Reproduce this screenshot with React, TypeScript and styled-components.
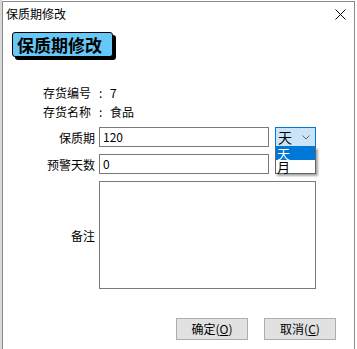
import React from "react";
import styled, { createGlobalStyle } from "styled-components";

const GlobalStyle = createGlobalStyle`
  html, body { margin: 0; padding: 0; background: #ffffff; }
  body { font-family: "Noto Sans CJK SC", "Liberation Sans", sans-serif; font-size: 12px; color: #000; }
  * { box-sizing: border-box; }
`;

const Page = styled.div`
  width: 357px;
  height: 349px;
  padding: 1px 2px 0 2px;
  background: linear-gradient(to right, #d8d8d8 0, #d8d8d8 2px, #ffffff 2px);
  overflow: hidden;
`;

const Window = styled.div`
  width: 353px;
  height: 348px;
  border: 1px solid #8a8a8a;
  border-bottom: none;
  background: #fff;
  display: flex;
  flex-direction: column;
`;

const TitleBar = styled.div`
  height: 28px;
  display: flex;
  align-items: flex-start;
  justify-content: space-between;
  padding: 5px 8px 0 3px;
`;

const TitleText = styled.span`
  font-size: 12px;
  line-height: 14px;
`;

const CloseIcon = styled.svg`
  width: 11px;
  height: 11px;
  margin-top: 2px;
`;

const Content = styled.div`
  display: flex;
  flex-direction: column;
  padding: 2px 0 0 9px;
`;

const Badge = styled.div`
  width: 101px;
  height: 25px;
  background: #66c8f6;
  border: 1px solid #000;
  border-radius: 3px;
  box-shadow: 3px 3px 0 #000;
  font-size: 17px;
  font-weight: bold;
  line-height: 23px;
  padding-left: 4px;
`;

const InfoBlock = styled.div`
  margin-top: 26px;
  padding-left: 31px;
  display: flex;
  flex-direction: column;
`;

const InfoRow = styled.div`
  display: flex;
  height: 19px;
  line-height: 19px;
`;

const InfoLabel = styled.span`
  width: 56px;
`;

const InfoColon = styled.span`
  width: 11px;
`;

const FormGrid = styled.div`
  margin-top: 6px;
  margin-left: -9px;
  display: grid;
  grid-template-columns: 96px 176px 41px;
  grid-template-rows: 20px 20px 108px;
  row-gap: 7px;
  position: relative;
`;

const FieldLabel = styled.label`
  padding-right: 4px;
  display: flex;
  align-items: center;
  justify-content: flex-end;
`;

const TextBox = styled.div`
  width: 170px;
  height: 20px;
  border: 1px solid #7a7a7a;
  padding-left: 3px;
  line-height: 18px;
  font-size: 12px;
`;

const Select = styled.div`
  width: 41px;
  height: 20px;
  border: 1px solid #0078d7;
  background: #cce4f7;
  display: flex;
  align-items: center;
  justify-content: space-between;
  padding: 0 5px 0 2px;
  font-size: 14px;
  line-height: 16px;
`;

const Chevron = styled.svg`
  width: 8px;
  height: 5px;
`;

const DropList = styled.div`
  position: absolute;
  left: 272px;
  top: 20px;
  width: 41px;
  border: 1px solid #646464;
  border-top: none;
  background: #fff;
  box-shadow: 2px 2px 2px rgba(0, 0, 0, 0.35);
  z-index: 2;
`;

const DropItem = styled.div<{ $active?: boolean }>`
  height: 13px;
  line-height: 13px;
  font-size: 13px;
  padding-left: 1px;
  background: ${(p) => (p.$active ? "#0078d7" : "#fff")};
  color: ${(p) => (p.$active ? "#fff" : "#000")};
`;

const NoteLabel = styled.label`
  padding-right: 4px;
  display: flex;
  align-items: center;
  justify-content: flex-end;
`;

const TextArea = styled.div`
  grid-column: 2 / span 2;
  width: 217px;
  height: 108px;
  border: 1px solid #7a7a7a;
`;

const ButtonRow = styled.div`
  margin-top: 29px;
  display: flex;
  justify-content: flex-end;
  gap: 16px;
  padding-right: 18px;
`;

const Button = styled.button`
  width: 72px;
  height: 22px;
  background: #e1e1e1;
  border: 1px solid #adadad;
  font-family: "Noto Sans CJK SC", "Liberation Sans", sans-serif;
  font-size: 12px;
  padding: 0;
  color: #000;
  line-height: 20px;
`;

const Mnemonic = styled.span`
  text-decoration: underline;
`;

export default function App() {
  return (
    <>
      <GlobalStyle />
      <Page>
        <Window>
          <TitleBar>
            <TitleText>保质期修改</TitleText>
            <CloseIcon viewBox="0 0 11 11">
              <path d="M0.5 0.5 L10.5 10.5 M10.5 0.5 L0.5 10.5" stroke="#000" strokeWidth="1" fill="none" />
            </CloseIcon>
          </TitleBar>
          <Content>
            <Badge>保质期修改</Badge>
            <InfoBlock>
              <InfoRow>
                <InfoLabel>存货编号</InfoLabel>
                <InfoColon>:</InfoColon>
                <span>7</span>
              </InfoRow>
              <InfoRow>
                <InfoLabel>存货名称</InfoLabel>
                <InfoColon>:</InfoColon>
                <span>食品</span>
              </InfoRow>
            </InfoBlock>
            <FormGrid>
              <FieldLabel>保质期</FieldLabel>
              <TextBox>120</TextBox>
              <Select>
                <span>天</span>
                <Chevron viewBox="0 0 8 5">
                  <path d="M0.5 0.5 L4 4 L7.5 0.5" stroke="#666" strokeWidth="1" fill="none" />
                </Chevron>
              </Select>
              <FieldLabel>预警天数</FieldLabel>
              <TextBox>0</TextBox>
              <span />
              <NoteLabel>备注</NoteLabel>
              <TextArea />
              <DropList>
                <DropItem $active>天</DropItem>
                <DropItem>月</DropItem>
              </DropList>
            </FormGrid>
            <ButtonRow>
              <Button>
                确定(<Mnemonic>O</Mnemonic>)
              </Button>
              <Button>
                取消(<Mnemonic>C</Mnemonic>)
              </Button>
            </ButtonRow>
          </Content>
        </Window>
      </Page>
    </>
  );
}
